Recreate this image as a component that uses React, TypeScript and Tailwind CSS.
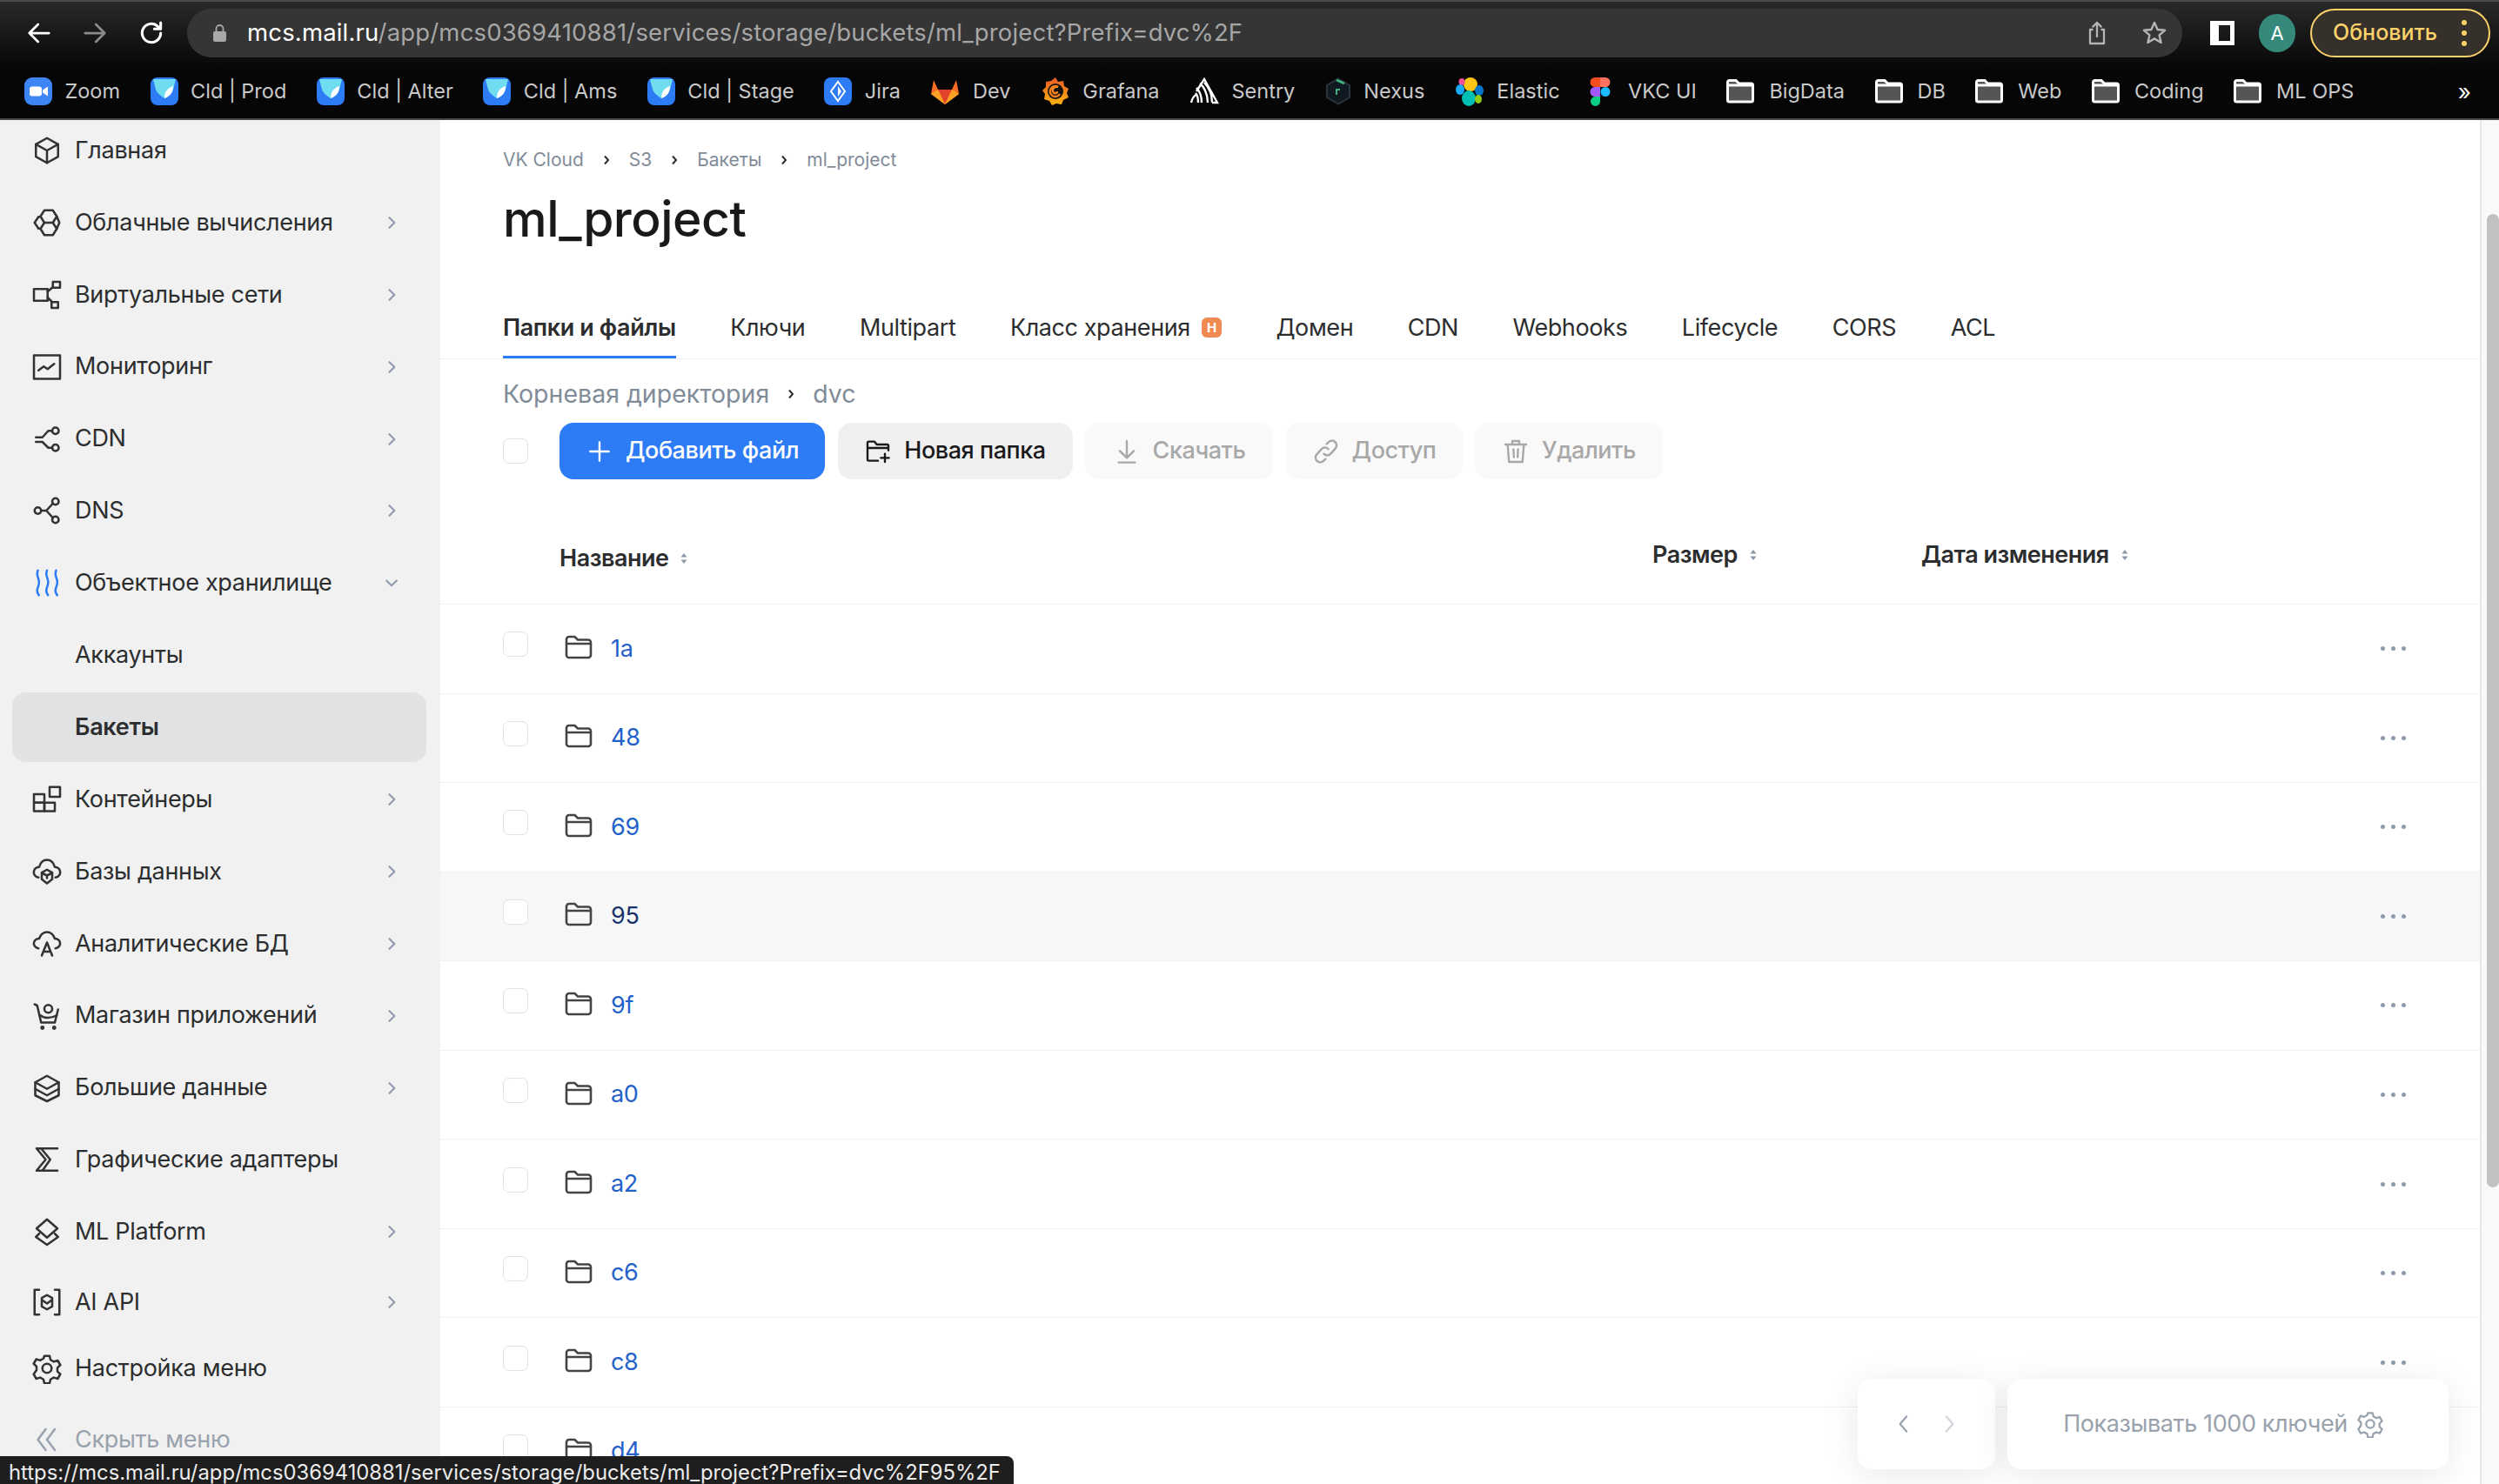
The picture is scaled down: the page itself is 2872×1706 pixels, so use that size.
import React from "react";

const S = ({ children, size = 36, sw = 1.7, className = "" }: { children: React.ReactNode; size?: number; sw?: number; className?: string }) => (
  <svg width={size} height={size} viewBox="0 0 24 24" fill="none" stroke="currentColor" strokeWidth={sw} strokeLinecap="round" strokeLinejoin="round" className={"shrink-0 " + className}>
    {children}
  </svg>
);

const nav: { label: string; icon: React.ReactNode; chev?: "r" | "d"; sub?: boolean; active?: boolean; muted?: boolean; blue?: boolean; h?: string }[] = [
  { label: "Главная", icon: <><path d="M12 2.500l8.500 4.800v9.400L12 21.500l-8.500-4.800V7.300z" /><path d="M3.500 7.300L12 12l8.500-4.700M12 12v9.500" /></> },
  { label: "Облачные вычисления", chev: "r", icon: <><path d="M10 2.500h6.500l3 4.700-3 4.800H10L7 7.200z" /><path d="M7 7.500H5.500L2.500 12l3 4.500H7" /><path d="M10 12l-3 4.700 3 4.800h6.500l3-4.800-3-4.700" /><path d="M19.500 7.200L21.500 12l-2 4.700" /></> },
  { label: "Виртуальные сети", chev: "r", icon: <><rect x="2" y="7.500" width="10.500" height="9" /><rect x="16.500" y="2" width="5.500" height="4.500" /><rect x="15.500" y="17.500" width="5" height="4.500" /><path d="M12.500 9.500L16.500 6M12.500 14l3.500 3.500" /></> },
  { label: "Мониторинг", chev: "r", icon: <><rect x="2" y="3" width="20" height="18" /><path d="M5.500 14.500l4-3 3 2 5-4" /></> },
  { label: "CDN", chev: "r", icon: <><circle cx="18.500" cy="5.500" r="2.500" /><circle cx="18.500" cy="18.500" r="2.500" /><path d="M16 5.500h-3L8.500 10.500H3.500M3.500 14h5l4.500 4.500h3" /></> },
  { label: "DNS", chev: "r", icon: <><circle cx="5" cy="12" r="2.500" /><circle cx="18.500" cy="5" r="2.500" /><circle cx="18.500" cy="19" r="2.500" /><path d="M7.500 12h4l5-5.500M11.500 12l5 5.500" /></> },
  { label: "Объектное хранилище", chev: "d", blue: true, icon: <><path d="M5 2.500C3 7 7 9 5.800 13S3.500 18 5.800 21.500" /><path d="M12 2.500C10 7 14 9 12.800 13S10.500 18 12.800 21.500" /><path d="M19 2.500C17 7 21 9 19.800 13S17.500 18 19.800 21.500" /></> },
  { label: "Аккаунты", sub: true, icon: null },
  { label: "Бакеты", sub: true, active: true, icon: null },
  { label: "Контейнеры", chev: "r", icon: <><rect x="2" y="8" width="8" height="6.500" /><rect x="2" y="14.500" width="8" height="6.500" /><rect x="10" y="14.500" width="8" height="6.500" /><rect x="14" y="2.500" width="8" height="7.500" /></> },
  { label: "Базы данных", chev: "r", icon: <><path d="M5.500 16.500C2.500 16 1.500 13.500 2 11.500c.5-2 2.500-3 4-3C7 5 9.500 3 12 3s5 2 6 5.500c1.500 0 3.500 1 4 3 .5 2-.5 4.500-3.500 5" /><path d="M12 10.500l4 2.300v5L12 21l-4-3.200v-5z" /><path d="M8 13l4 2 4-2M12 15v2" /></> },
  { label: "Аналитические БД", chev: "r", icon: <><path d="M5.500 15.500C3 15 1.500 13 2 11c.5-2 2.500-3 4-3C7 5 9.500 3 12 3s5 2 6 5c1.500 0 3.500 1 4 3 .5 2-1 4-3.500 4.500" /><path d="M8 21l4-10 4 10M9.500 18h5" /></> },
  { label: "Магазин приложений", chev: "r", icon: <><path d="M2.500 3l2 1 3 13h10.500l2.500-10" /><circle cx="13" cy="6.500" r="3" /><path d="M7 11.500c3 2.500 8 2.500 12.500 0" /><circle cx="8.500" cy="21" r=".8" fill="currentColor" /><circle cx="17.500" cy="21" r=".8" fill="currentColor" /></> },
  { label: "Большие данные", chev: "r", icon: <><path d="M12 2.500l9 5v10l-9 4.500-9-4.500v-10z" /><path d="M3 7.500l9 5 9-5M3 12.500l9 5 9-5" /></> },
  { label: "Графические адаптеры", icon: <><path d="M20 3.500H4l7 8.500-7 8.500h16" /><path d="M7.500 3.500l7 8.500-6 8.500" /></> },
  { label: "ML Platform", chev: "r", icon: <><path d="M12 2.500l8 7-8 7-8-7z" /><path d="M6 13.500l-2.500 2.500 8.500 6 8.500-6-2.500-2.500" /></> },
  { label: "AI API", chev: "r", h: "h-[76px]", icon: <><path d="M6 2.500H2.500v19H6M18 2.500h3.500v19H18" /><path d="M12 6.500l4 2.300v6.400l-4 2.300-4-2.300V8.800z" /><path d="M8.500 10.500L12 13l3.500-2.500" /></> },
  { label: "Настройка меню", h: "h-[70px]", icon: <><path d="M10 2.500h4l.7 3 2.500 1.400 3-.9 2 3.500-2.200 2.100v2.800l2.200 2.100-2 3.500-3-.9-2.500 1.400-.7 3h-4l-.7-3-2.500-1.400-3 .9-2-3.500L4 13.400v-2.800L1.800 8.500l2-3.500 3 .9 2.500-1.400z" /><circle cx="12" cy="12" r="3.500" /></> },
  { label: "Скрыть меню", muted: true, icon: <><path d="M11 4l-6 8 6 8M18 4l-6 8 6 8" /></> },
];

const FolderSmall = () => (
  <svg width="32" height="28" viewBox="0 0 32 28" className="shrink-0">
    <path d="M1.500 3.500a2 2 0 0 1 2-2h7.500l3.500 3.500h14a2 2 0 0 1 2 2v17a2 2 0 0 1-2 2h-25a2 2 0 0 1-2-2z" fill="#555" stroke="#fff" strokeWidth="3" />
    <path d="M1.500 7h29" stroke="#fff" strokeWidth="3" />
  </svg>
);

const CldIcon = () => (
  <svg width="32" height="32" viewBox="0 0 32 32" className="shrink-0">
    <rect width="32" height="32" rx="8" fill="#2d7cf6" />
    <path d="M3 2h26l-3 12c-2 5-6 7-10 10-4-3-8-5-10-10z" fill="#6fdcf0" />
    <path d="M16 24c0-8 4-12 10-14 0 8-4 12-10 14z" fill="#fff" />
  </svg>
);

const marks: { label: string; gap?: string; icon: React.ReactNode }[] = [
  { label: "Zoom", icon: <svg width="32" height="32" viewBox="0 0 32 32" className="shrink-0"><rect width="32" height="32" rx="9" fill="#3d85f5" /><rect x="6" y="10.500" width="14" height="11" rx="3" fill="#fff" /><path d="M21 14.500l6-4v11l-6-4z" fill="#fff" /></svg> },
  { label: "Cld | Prod", icon: <CldIcon /> },
  { label: "Cld | Alter", icon: <CldIcon /> },
  { label: "Cld | Ams", icon: <CldIcon /> },
  { label: "Cld | Stage", icon: <CldIcon /> },
  { label: "Jira", icon: <svg width="32" height="32" viewBox="0 0 32 32" className="shrink-0"><rect width="32" height="32" rx="8" fill="#2d7cf6" /><path d="M16 5l8 11-8 11-8-11z" fill="none" stroke="#fff" strokeWidth="2" /><path d="M16 10l4 6-4 6z" fill="#fff" /></svg> },
  { label: "Dev", icon: <svg width="34" height="32" viewBox="0 0 34 32" className="shrink-0"><path d="M17 31L1 19 4 3l5 11h16l5-11 3 16z" fill="#fc6d26" /><path d="M17 31L9 14h16z" fill="#e24329" /><path d="M17 31L1 19l8-5z" fill="#fca326" /><path d="M17 31l16-12-8-5z" fill="#fca326" /></svg> },
  { label: "Grafana", icon: <svg width="34" height="34" viewBox="0 0 34 34" className="shrink-0"><defs><linearGradient id="gf" x1="0" y1="1" x2="0" y2="0"><stop offset="0" stopColor="#fbb40f" /><stop offset="1" stopColor="#ee5a24" /></linearGradient></defs><path d="M17 1l3 5 6-1 1 6 5 3-2 5 2 5-6 3-2 5-6-1-5 2-3-5-6-2 1-6-3-4 4-4v-6l6-1z" fill="url(#gf)" /><circle cx="17" cy="17" r="9" fill="#111" /><path d="M22 20a6 6 0 1 1-2-8c-4-1-7 2-6 5s5 3 5 0" fill="none" stroke="#f6821f" strokeWidth="2.500" /></svg> },
  { label: "Sentry", icon: <svg width="34" height="32" viewBox="0 0 34 32" className="shrink-0"><path d="M2 29c1-5 3-8 7-10M10 29c0-7-2-10-3-11M14 29c0-9-3-14-6-17M8 16L17 2l15 27h-6M21 29C21 18 16 10 12 7M26 29C26 18 21 10 17 6" fill="none" stroke="#fff" strokeWidth="2.400" /></svg> },
  { label: "Nexus", icon: <svg width="30" height="32" viewBox="0 0 30 32" className="shrink-0"><path d="M15 1.500l13 7.500v14l-13 7.500L2 23V9z" fill="#101820" stroke="#2a3540" strokeWidth="2" /><path d="M13 3l9 4" stroke="#3fb27f" strokeWidth="3" /><path d="M13 20v-6h4" fill="none" stroke="#3fb27f" strokeWidth="2" /></svg> },
  { label: "Elastic", icon: <svg width="34" height="34" viewBox="0 0 34 34" className="shrink-0"><ellipse cx="18" cy="9" rx="8" ry="8" fill="#fec514" /><ellipse cx="8" cy="6" rx="3.500" ry="4" fill="#f04e98" /><ellipse cx="6" cy="15" rx="5" ry="6" fill="#1ba9f5" /><ellipse cx="28" cy="16" rx="5" ry="6" fill="#07c" /><ellipse cx="16" cy="25" rx="8" ry="9" fill="#00bfb3" /><ellipse cx="27" cy="26" rx="4" ry="5" fill="#93c90e" /></svg> },
  { label: "VKC UI", gap: "gap-[20px]", icon: <svg width="24" height="34" viewBox="0 0 24 34" className="shrink-0"><path d="M12 1H6a5.500 5.500 0 0 0 0 11h6z" fill="#f24e1e" /><path d="M12 1h6a5.500 5.500 0 0 1 0 11h-6z" fill="#ff7262" /><path d="M12 12H6a5.500 5.500 0 0 0 0 11h6z" fill="#a259ff" /><circle cx="18" cy="17.500" r="5.500" fill="#1abcfe" /><path d="M6 23h6v5.500a5.500 5.500 0 1 1-6-5.500z" fill="#0acf83" /></svg> },
  { label: "BigData", gap: "gap-[17px]", icon: <FolderSmall /> },
  { label: "DB", gap: "gap-[17px]", icon: <FolderSmall /> },
  { label: "Web", gap: "gap-[17px]", icon: <FolderSmall /> },
  { label: "Coding", gap: "gap-[17px]", icon: <FolderSmall /> },
  { label: "ML OPS", gap: "gap-[17px]", icon: <FolderSmall /> },
];

const tabs = ["Ключи", "Multipart", "Класс хранения", "Домен", "CDN", "Webhooks", "Lifecycle", "CORS", "ACL"];
const rows = ["1a", "48", "69", "95", "9f", "a0", "a2", "c6", "c8", "d4"];

const Sort = () => (
  <svg width="10" height="16" viewBox="0 0 10 16" className="shrink-0 ml-[13px]"><path d="M5 2l3.500 4.500h-7zM5 14l3.500-4.500h-7z" fill="#8c97a8" /></svg>
);

const Crumb = () => (
  <svg width="10" height="14" viewBox="0 0 10 14" className="shrink-0"><path d="M3 2.500L7 7l-4 4.500" fill="none" stroke="#2c2d2e" strokeWidth="2" /></svg>
);

const Box = () => <div className="w-[29px] h-[29px] rounded-[7px] border border-[#dfe2e8] bg-white shrink-0" />;

const Btn = ({ w, icon, label, cls }: { w: string; icon: React.ReactNode; label: string; cls: string }) => (
  <div className={"h-[65px] rounded-2xl flex items-center justify-center gap-[14px] text-[27px] tracking-[-0.45px] font-medium shrink-0 " + w + " " + cls}>
    {icon}
    <span>{label}</span>
  </div>
);

export default function App() {
  return (
    <div className="relative w-[2872px] h-[1706px] overflow-hidden bg-white flex flex-col font-['Inter',sans-serif] text-[#2c2d2e]">
      {/* browser chrome */}
      <div className="h-[138px] shrink-0 border-t-2 border-b-2 border-t-[#4b4b4b] border-b-[#474747] bg-gradient-to-b from-[#2a2a2a] to-[#060606] to-60% flex flex-col">
        <div className="h-[64px] flex items-center pt-[8px] shrink-0">
          <div className="flex items-center w-[215px] shrink-0 pl-[30px] gap-[34px] text-white">
            <S size={30} sw={2.200}><path d="M21 12H3M11 4l-8 8 8 8" /></S>
            <S size={30} sw={2.200} className="text-[#8a8a8a]"><path d="M3 12h18M13 4l8 8-8 8" /></S>
            <S size={32} sw={2.300}><path d="M20 12a8 8 0 1 1-2.500-5.800L20 8.500M20 3v5.500h-5.500" /></S>
          </div>
          <div className="w-[2293px] h-[56px] rounded-full bg-[#353535] flex items-center pl-[30px] pr-[16px] shrink-0">
            <svg width="15" height="20" viewBox="0 0 15 20" className="shrink-0"><path d="M3.500 8V5a4 4 0 0 1 8 0v3" fill="none" stroke="#a8a8a8" strokeWidth="1.800" /><rect y="8" width="15" height="12" rx="2" fill="#a8a8a8" /></svg>
            <div className="ml-[24px] text-[27.500px] text-[#a6a6a6] whitespace-nowrap tracking-[0.17px]"><span className="text-white">mcs.mail.ru</span>/app/mcs0369410881/services/storage/buckets/ml_project?Prefix=dvc%2F</div>
            <div className="ml-auto flex items-center gap-[34px] text-[#b5b5b5]">
              <S size={32} sw={1.700}><path d="M8 9H6v12h12V9h-2M12 15V3M8.500 6.500L12 3l3.500 3.500" /></S>
              <S size={32} sw={1.800}><path d="M12 3l2.700 6 6.300.6-4.800 4.200 1.500 6.400L12 16.800l-5.700 3.400 1.500-6.400L3 9.600 9.300 9z" /></S>
            </div>
          </div>
          <div className="ml-[32px] w-[28px] h-[28px] border-[5px] border-white border-l-[10px] shrink-0" />
          <div className="ml-[28px] w-[42px] h-[44px] rounded-full bg-[#35897a] text-white text-[22px] flex items-center justify-center shrink-0">A</div>
          <div className="ml-[17px] w-[207px] h-[56px] rounded-full border-2 border-[#fcd36a] bg-[#35302a] text-[#fcd36a] text-[25px] font-medium flex items-center pl-[24px] shrink-0">
            <span>Обновить</span>
            <span className="ml-[28px] flex flex-col gap-[6px]"><i className="block w-[6px] h-[6px] rounded-full bg-[#fcd36a]" /><i className="block w-[6px] h-[6px] rounded-full bg-[#fcd36a]" /><i className="block w-[6px] h-[6px] rounded-full bg-[#fcd36a]" /></span>
          </div>
        </div>
        <div className="flex-1 flex items-center pl-[28px] pr-[32px] pt-[8px] gap-[34.500px] text-[23.500px] text-[#c9c9c9] whitespace-nowrap">
          {marks.map((m) => (
            <div key={m.label} className={"flex items-center shrink-0 " + (m.gap ?? "gap-[14.500px]")}>
              {m.icon}
              <span>{m.label}</span>
            </div>
          ))}
          <span className="ml-auto text-white text-[26px]">»</span>
        </div>
      </div>

      <div className="flex-1 flex min-h-0">
        {/* sidebar */}
        <aside className="w-[506px] shrink-0 bg-[#f1f1f1] overflow-hidden pl-[14px] pr-[16px]">
          <div className="-mt-[5px] flex flex-col gap-[2.900px] text-[27px] tracking-[-0.3px]">
            {nav.map((n) => (
              <div key={n.label} className={"flex items-center shrink-0 rounded-2xl " + (n.h ?? "h-[80px]") + " " + (n.active ? "bg-[#e1e2e4] font-semibold " : "") + (n.muted ? "text-[#99a2ad] mt-[4px] " : "")}>
                {n.sub ? (
                  <span className="pl-[72px]">{n.label}</span>
                ) : (
                  <>
                    <span className={"ml-[22px] " + (n.blue ? "text-[#2d7cf6]" : n.muted ? "text-[#99a2ad]" : "text-[#333]")}>
                      <S size={36}>{n.icon}</S>
                    </span>
                    <span className="ml-[14px] whitespace-nowrap">{n.label}</span>
                    {n.chev === "r" && <S size={20} sw={2.600} className="ml-auto mr-[30px] text-[#8f9bac]"><path d="M9 5l7 7-7 7" /></S>}
                    {n.chev === "d" && <S size={20} sw={2.600} className="ml-auto mr-[30px] text-[#8f9bac]"><path d="M5 9l7 7 7-7" /></S>}
                  </>
                )}
              </div>
            ))}
          </div>
        </aside>

        {/* main */}
        <main className="flex-1 min-w-0 overflow-hidden">
          <div className="pl-[72px] pt-[33px]">
            <div className="flex items-center gap-[21px] text-[21px] leading-[26px] text-[#818c99]">
              <span>VK Cloud</span><Crumb /><span>S3</span><Crumb /><span>Бакеты</span><Crumb /><span>ml_project</span>
            </div>
          </div>
          <h1 className="pl-[72px] mt-[19px] text-[57px] font-medium tracking-[-0.5px] leading-[72px] text-[#19191a]">ml_project</h1>
          <div className="mt-[64px] h-[61px] pl-[72px] flex gap-[62.500px] border-b border-[#eef0f3] text-[27px] tracking-[-0.4px] leading-[34px]">
            <div className="h-[60px] border-b-[3px] border-[#2d7cf6] font-semibold whitespace-nowrap pt-[8px]">Папки и файлы</div>
            {tabs.map((t) => (
              <div key={t} className="flex items-start gap-[13px] whitespace-nowrap pt-[8px]">
                {t}
                {t === "Класс хранения" && <span className="mt-[5px] w-[23px] h-[23px] rounded-[6px] bg-[#f08a52] text-white text-[15px] font-bold flex items-center justify-center">Н</span>}
              </div>
            ))}
          </div>
          <div className="pl-[72px] mt-[22px] h-[36px] flex items-center gap-[20px] text-[28.500px] text-[#818c99]">
            <span>Корневая директория</span><Crumb /><span>dvc</span>
          </div>
          <div className="pl-[72px] mt-[15px] flex items-center">
            <Box />
            <div className="ml-[36px] flex gap-[14.500px]">
              <Btn w="w-[305px]" cls="bg-[#2d7cf6] text-white" label="Добавить файл" icon={<S size={32} sw={1.800}><path d="M12 4v16M4 12h16" /></S>} />
              <Btn w="w-[270px]" cls="bg-[#f0f0f0] text-[#19191a]" label="Новая папка" icon={<S size={32} sw={1.800}><path d="M21 11V7a1 1 0 0 0-1-1h-9L9 3.500H4a1 1 0 0 0-1 1V19a1 1 0 0 0 1 1h8M3 9h18M18 14v7M14.500 17.500h7" /></S>} />
              <Btn w="w-[216px]" cls="bg-[#f9f9f9] text-[#a8a8a8]" label="Скачать" icon={<S size={32} sw={1.800}><path d="M12 3v14M6 11.500l6 6 6-6M5 21.500h14" /></S>} />
              <Btn w="w-[203px]" cls="bg-[#f9f9f9] text-[#a8a8a8]" label="Доступ" icon={<S size={32} sw={1.800}><path d="M10 14a4 4 0 0 0 6 0l4-4.500a4 4 0 0 0-6-5.500l-1.500 1.500" /><path d="M14 10a4 4 0 0 0-6 0l-4 4.500a4 4 0 0 0 6 5.500l1.500-1.500" /></S>} />
              <Btn w="w-[216px]" cls="bg-[#f9f9f9] text-[#a8a8a8]" label="Удалить" icon={<S size={32} sw={1.800}><path d="M3 6h18M9 6V3h6v3M5 6l1.200 15h11.600L19 6M10 10l.4 7M14 10l-.4 7" /></S>} />
            </div>
          </div>

          <div className="h-[144px] pl-[137px] flex items-start text-[27px] tracking-[-0.5px] font-semibold border-b border-[#eef0f3] pt-[69px] whitespace-nowrap">
            <div className="w-[1256px] flex items-center mt-[4px] h-[36px]">Название<Sort /></div>
            <div className="w-[309px] flex items-center h-[36px]">Размер<Sort /></div>
            <div className="flex items-center h-[36px]">Дата изменения<Sort /></div>
          </div>

          {rows.map((r) => (
            <div key={r} className={"h-[102.550px] shrink-0 border-b border-[#eef0f3] flex items-center pl-[72px] pr-[85px] " + (r === "95" ? "bg-[#f6f7f9]" : "")}>
              <div className="-mt-[10px]"><Box /></div>
              <svg width="32" height="28" viewBox="0 0 32 28" fill="none" stroke="#444" strokeWidth="2.600" className="ml-[42px] -mt-[4px] shrink-0"><path d="M2 5a3 3 0 0 1 3-3h6.500l3.500 3.500h12a3 3 0 0 1 3 3V23a3 3 0 0 1-3 3H5a3 3 0 0 1-3-3zM2 10h28" /></svg>
              <span className={"ml-[21px] text-[27px] tracking-[-0.3px] " + (r === "95" ? "text-[#19336b]" : "text-[#2261c9]")}>{r}</span>
              <span className="ml-auto flex gap-[7px]"><i className="block w-[5px] h-[5px] rounded-full bg-[#8f9bac]" /><i className="block w-[5px] h-[5px] rounded-full bg-[#8f9bac]" /><i className="block w-[5px] h-[5px] rounded-full bg-[#8f9bac]" /></span>
            </div>
          ))}
        </main>

        {/* scrollbar */}
        <div className="w-[22px] shrink-0 bg-[#f9f9f9] border-l-2 border-[#e6e6e6] pl-[6px] pt-[108px]">
          <div className="w-[14px] h-[1119px] bg-[#c1c1c1] rounded-t-full rounded-b-full" />
        </div>
      </div>

      {/* floating pager */}
      <div className="absolute right-[58px] bottom-[17px] flex gap-[14px] text-[#99a2ad]">
        <div className="w-[158px] h-[104px] rounded-2xl bg-white shadow-[0_6px_40px_rgba(0,0,0,0.09)] flex items-center justify-center gap-[26px]">
          <S size={26} sw={2}><path d="M15 4l-7 8 7 8" /></S>
          <S size={26} sw={2} className="text-[#d0d5db]"><path d="M9 4l7 8-7 8" /></S>
        </div>
        <div className="w-[507px] h-[104px] rounded-2xl bg-white shadow-[0_6px_40px_rgba(0,0,0,0.09)] flex items-center justify-center gap-[10px] pr-[10px] text-[27px] tracking-[-0.4px] whitespace-nowrap">
          <span>Показывать 1000 ключей</span>
          <S size={32} sw={1.700}><path d="M10 2.500h4l.7 3 2.500 1.400 3-.9 2 3.500-2.200 2.100v2.800l2.200 2.100-2 3.500-3-.9-2.500 1.400-.7 3h-4l-.7-3-2.500-1.400-3 .9-2-3.500L4 13.400v-2.800L1.800 8.500l2-3.500 3 .9 2.500-1.400z" /><circle cx="12" cy="12" r="3.500" /></S>
        </div>
      </div>

      {/* status bubble */}
      <div className="absolute left-0 bottom-0 w-[1165px] h-[32px] bg-[#1e1e1e] rounded-tr-lg text-[#ececec] text-[23.800px] leading-[38px] pl-[10px] whitespace-nowrap overflow-hidden">
        https://mcs.mail.ru/app/mcs0369410881/services/storage/buckets/ml_project?Prefix=dvc%2F95%2F
      </div>
    </div>
  );
}
